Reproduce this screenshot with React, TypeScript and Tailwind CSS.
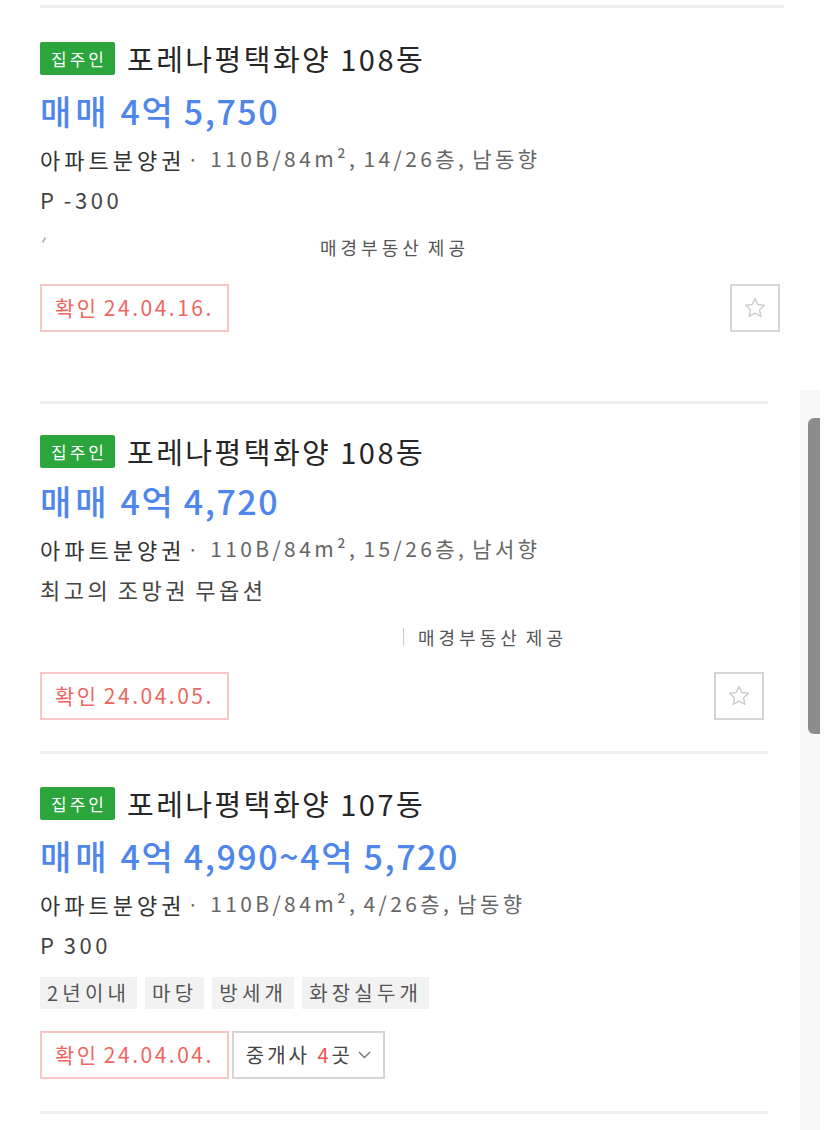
import React from "react";

type Card = {
  dong: string;
  amount: string;
  detail: string;
  line2?: string;
  tags?: string[];
  source?: "slash" | "bar";
  date: string;
  brokers?: number;
  pt: string;
  pb: string;
  priceMt: string;
  boxMt: string;
  starMr?: string;
};

const cards: Card[] = [
  {
    dong: "108동",
    amount: "4억 5,750",
    detail: "110B/84m², 14/26층, 남동향",
    line2: "P -300",
    source: "slash",
    date: "확인 24.04.16.",
    pt: "pt-[33px]",
    pb: "pb-[69px]",
    priceMt: "mt-[15px]",
    boxMt: "mt-[22px]",
    starMr: "-mr-[12px]",
  },
  {
    dong: "108동",
    amount: "4억 4,720",
    detail: "110B/84m², 15/26층, 남서향",
    line2: "최고의 조망권 무옵션",
    source: "bar",
    date: "확인 24.04.05.",
    pt: "pt-[30px]",
    pb: "pb-[31px]",
    priceMt: "mt-[12px]",
    boxMt: "mt-[20px]",
    starMr: "mr-[4px]",
  },
  {
    dong: "107동",
    amount: "4억 4,990~4억 5,720",
    detail: "110B/84m², 4/26층, 남동향",
    line2: "P 300",
    tags: ["2년이내", "마당", "방세개", "화장실두개"],
    date: "확인 24.04.04.",
    brokers: 4,
    pt: "pt-[32px]",
    pb: "pb-[32px]",
    priceMt: "mt-[15px]",
    boxMt: "mt-[22px]",
  },
];

function Star() {
  return (
    <svg width="26" height="26" viewBox="0 0 24 24" fill="none" stroke="#c9cdd3" strokeWidth="1.3" strokeLinejoin="round">
      <path d="M12 3.2l2.6 5.6 6.1.7-4.5 4.2 1.2 6.1L12 16.8l-5.4 3 1.2-6.1-4.5-4.2 6.1-.7z" />
    </svg>
  );
}

function Item({ c }: { c: Card }) {
  return (
    <div className={`border-b-[3px] border-[#eeeeee] ${c.pt} ${c.pb}`}>
      {/* 제목 */}
      <div className="flex h-[34px] items-center gap-[12px] whitespace-nowrap">
        <span className="flex h-[33px] w-[75px] items-center justify-center rounded-[2px] bg-[#2ca53d] pl-[3px] text-[17px] leading-none tracking-[3px] text-white">
          집주인
        </span>
        <span className="text-[29px] leading-none tracking-[2.5px] text-[#262626]">포레나평택화양 {c.dong}</span>
      </div>

      {/* 가격 */}
      <div className={`${c.priceMt} flex h-[42px] items-center whitespace-nowrap text-[34px] font-medium leading-none text-[#4f86ec]`}>
        <span className="tracking-[4px]">매매</span>
        <span className="ml-[10px] tracking-[1.6px]">{c.amount}</span>
      </div>

      {/* 정보 */}
      <div className="mt-[12px] flex h-[30px] items-center whitespace-nowrap">
        <span className="text-[22px] tracking-[4px] text-[#333]">아파트분양권</span>
        <span className="ml-[2px] mr-[12px] text-[19px] text-[#666]">·</span>
        <span className="text-[21px] tracking-[3.4px] text-[#666] [word-spacing:-3px]">{c.detail}</span>
      </div>

      <div className="mt-[10px] flex h-[30px] items-center whitespace-nowrap text-[22px] tracking-[3.5px] text-[#444] [word-spacing:-2px]">
        {c.line2}
      </div>

      {c.tags ? (
        <div className="mt-[18px] flex h-[32px] gap-[8px]">
          {c.tags.map((t) => (
            <span key={t} className="flex items-center bg-[#f2f2f2] px-[7px] text-[20px] tracking-[4.2px] text-[#555]">
              {t}
            </span>
          ))}
        </div>
      ) : (
        <div className="mt-[18px] flex h-[30px] items-center whitespace-nowrap text-[18px] tracking-[4px] text-[#555] [word-spacing:-3px]">
          {c.source === "slash" ? (
            <>
              <span className="ml-[3px] mb-[14px] h-[6px] w-[2px] rotate-[30deg] bg-[#bbb]" />
              <span className="ml-[275px]">매경부동산 제공</span>
            </>
          ) : (
            <>
              <span className="ml-[363px] h-[18px] w-[1px] bg-[#ccc]" />
              <span className="ml-[14px]">매경부동산 제공</span>
            </>
          )}
        </div>
      )}

      {/* 확인 / 관심 */}
      <div className={`${c.boxMt} flex h-[48px] items-stretch gap-[3px]`}>
        <span className="flex items-center whitespace-nowrap border-2 border-[#f8c6c6] px-[13px] text-[21px] tracking-[2.5px] text-[#ee6660] [word-spacing:-2px]">
          {c.date}
        </span>
        {c.brokers ? (
          <span className="flex items-center whitespace-nowrap border-2 border-[#d5d5d5] px-[12px] text-[20px] tracking-[3px] text-[#444]">
            중개사&nbsp;<span className="text-[#ee5550]">{c.brokers}</span>곳
            <svg className="ml-[5px]" width="13" height="8" viewBox="0 0 13 8" fill="none" stroke="#777" strokeWidth="1.4">
              <path d="M1 1l5.5 5.5L12 1" />
            </svg>
          </span>
        ) : (
          <button type="button" className={`ml-auto flex w-[50px] items-center justify-center border-2 border-[#d5d5d5] ${c.starMr ?? ""}`}>
            <Star />
          </button>
        )}
      </div>
    </div>
  );
}

export default function App() {
  return (
    <div
      className="relative h-[1130px] w-full overflow-hidden bg-white"
      style={{ fontFamily: '"Noto Sans CJK KR", "Noto Sans", sans-serif' }}
    >
      <div className="ml-[40px] mt-[5px] h-[3px] w-[744px] bg-[#eeeeee]" />
      <div className="ml-[40px] w-[728px]">
        {cards.map((c, i) => (
          <Item key={i} c={c} />
        ))}
      </div>

      {/* 스크롤바 */}
      <div className="absolute right-[7px] top-[390px] bottom-0 w-[20px] bg-[#f8f8f8]" />
      <div className="absolute right-[7px] top-[418px] h-[316px] w-[12px] rounded-l-[6px] bg-[#8c8c8c]" />
    </div>
  );
}
